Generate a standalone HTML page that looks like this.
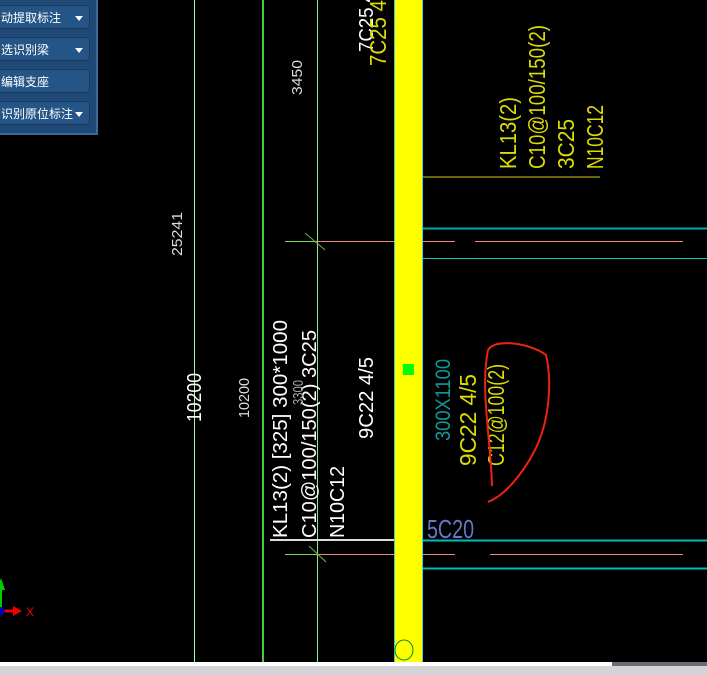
<!DOCTYPE html>
<html><head><meta charset="utf-8"><style>
html,body{margin:0;padding:0;background:#000;width:707px;height:675px;overflow:hidden}
.panel{position:absolute;left:0;top:0;width:96px;height:133px;background:#1f4a77;border-right:2px solid #3a6a9a;border-bottom:2px solid #3a6a9a}
.btn{position:absolute;left:-4px;width:94px;height:24px;background:#245586;border:1px solid #17395c;border-radius:3px;color:#fff;font:12px "Liberation Sans","Noto Sans CJK SC",sans-serif;line-height:24px;padding-left:4px;box-sizing:border-box;white-space:nowrap}
.btn i{position:absolute;right:6px;top:10px;width:0;height:0;border-left:4px solid transparent;border-right:4px solid transparent;border-top:5px solid #fff}
svg{position:absolute;left:0;top:0}
text{font-family:"Liberation Sans",sans-serif}
</style></head><body>
<svg width="707" height="675">
<line x1="194.5" y1="0" x2="194.5" y2="662" stroke="#9f9" stroke-width="1"/>
<line x1="263" y1="0" x2="263" y2="662" stroke="#4c4" stroke-width="2"/>
<line x1="317.5" y1="0" x2="317.5" y2="662" stroke="#8e8" stroke-width="1"/>
<line x1="423" y1="177" x2="600" y2="177" stroke="#cc0" stroke-width="1"/>
<line x1="423" y1="228.5" x2="707" y2="228.5" stroke="#0aa" stroke-width="2"/>
<line x1="285" y1="241.5" x2="317" y2="241.5" stroke="#7d5"/>
<line x1="317" y1="241.5" x2="455" y2="241.5" stroke="#e87"/>
<line x1="475" y1="241.5" x2="683" y2="241.5" stroke="#e87"/>
<line x1="423" y1="258.5" x2="707" y2="258.5" stroke="#0cc"/>
<line x1="305" y1="233" x2="325" y2="250" stroke="#6b4"/>
<line x1="270" y1="540" x2="394" y2="540" stroke="#ddd" stroke-width="2"/>
<line x1="423" y1="540.5" x2="707" y2="540.5" stroke="#0bb" stroke-width="2"/>
<line x1="285" y1="554.5" x2="317" y2="554.5" stroke="#7d5"/>
<line x1="317" y1="554.5" x2="455" y2="554.5" stroke="#e87"/>
<line x1="490" y1="554.5" x2="683" y2="554.5" stroke="#e87"/>
<line x1="423" y1="568.5" x2="707" y2="568.5" stroke="#0bb" stroke-width="2"/>
<line x1="309" y1="546" x2="326" y2="562" stroke="#6b4"/>
<rect x="394" y="0" width="29" height="662" fill="#ff0"/>
<line x1="394.5" y1="0" x2="394.5" y2="662" stroke="#4cc"/>
<line x1="422.5" y1="0" x2="422.5" y2="662" stroke="#4cc"/>
<rect x="403" y="364" width="11" height="11" fill="#0f0"/>
<ellipse cx="404" cy="650" rx="9" ry="10" fill="none" stroke="#082"/>
<g font-size="20" fill="#fff">
<text transform="translate(287,538) rotate(-90)" textLength="218" lengthAdjust="spacingAndGlyphs">KL13(2) [325] 300*1000</text>
<text transform="translate(316,538) rotate(-90)" textLength="208" lengthAdjust="spacingAndGlyphs">C10@100/150(2) 3C25</text>
<text transform="translate(344,538) rotate(-90)" textLength="72" lengthAdjust="spacingAndGlyphs">N10C12</text>
<text transform="translate(373,439) rotate(-90)" textLength="82" lengthAdjust="spacingAndGlyphs">9C22 4/5</text>
<text transform="translate(201,422) rotate(-90)" textLength="49" lengthAdjust="spacingAndGlyphs">10200</text>
<text transform="translate(373,52) rotate(-90)" textLength="60" lengthAdjust="spacingAndGlyphs">7C25 4</text>
</g>
<g font-size="15" fill="#ddd">
<text transform="translate(249,418) rotate(-90)" textLength="40" lengthAdjust="spacingAndGlyphs">10200</text>
<text transform="translate(182,256) rotate(-90)" textLength="44" lengthAdjust="spacingAndGlyphs">25241</text>
<text transform="translate(302,95) rotate(-90)" textLength="35" lengthAdjust="spacingAndGlyphs">3450</text>
<text transform="translate(303,405) rotate(-90)" textLength="25" lengthAdjust="spacingAndGlyphs" fill="#aaa">3300</text>
</g>
<g font-size="23" fill="#dd0">
<text transform="translate(386,66) rotate(-90)" textLength="66" lengthAdjust="spacingAndGlyphs">7C25 4</text>
<text transform="translate(516,169) rotate(-90)" textLength="72" lengthAdjust="spacingAndGlyphs">KL13(2)</text>
<text transform="translate(545,169) rotate(-90)" textLength="144" lengthAdjust="spacingAndGlyphs">C10@100/150(2)</text>
<text transform="translate(574,169) rotate(-90)" textLength="50" lengthAdjust="spacingAndGlyphs">3C25</text>
<text transform="translate(603,169) rotate(-90)" textLength="64" lengthAdjust="spacingAndGlyphs">N10C12</text>
<text transform="translate(476,466) rotate(-90)" textLength="92" lengthAdjust="spacingAndGlyphs">9C22 4/5</text>
<text transform="translate(504,466) rotate(-90)" textLength="102" lengthAdjust="spacingAndGlyphs">C12@100(2)</text>
</g>
<text transform="translate(450,441) rotate(-90)" font-size="21" fill="#199" textLength="82" lengthAdjust="spacingAndGlyphs">300X1100</text>
<text x="427" y="538" font-size="26" fill="#67c" textLength="47" lengthAdjust="spacingAndGlyphs">5C20</text>
<path d="M492,486 C491,440 480,390 488,350 C495,338 530,343 546,355 C552,380 550,420 535,450 C522,475 505,495 488,502" fill="none" stroke="#e21" stroke-width="2"/>
<line x1="1" y1="610" x2="1" y2="585" stroke="#0c0" stroke-width="2"/>
<polygon points="-3,590 1,578 5,590" fill="#0c0"/>
<line x1="2" y1="611" x2="16" y2="611" stroke="#e00" stroke-width="3"/>
<polygon points="13,606 22,611 13,616" fill="#e00"/>
<circle cx="1" cy="611" r="4" fill="#00a"/>
<text x="26" y="616" font-size="12" fill="#e00">X</text>
<rect x="0" y="662" width="707" height="13" fill="#d4d4d8"/>
<rect x="0" y="662" width="612" height="4" fill="#fff"/>
<rect x="612" y="662" width="95" height="4" fill="#6a6e72"/>
</svg>
<div class="panel">
<div class="btn" style="top:5px">动提取标注<i></i></div>
<div class="btn" style="top:37px">选识别梁<i></i></div>
<div class="btn" style="top:69px">编辑支座</div>
<div class="btn" style="top:101px">识别原位标注<i></i></div>
</div>
</body></html>
